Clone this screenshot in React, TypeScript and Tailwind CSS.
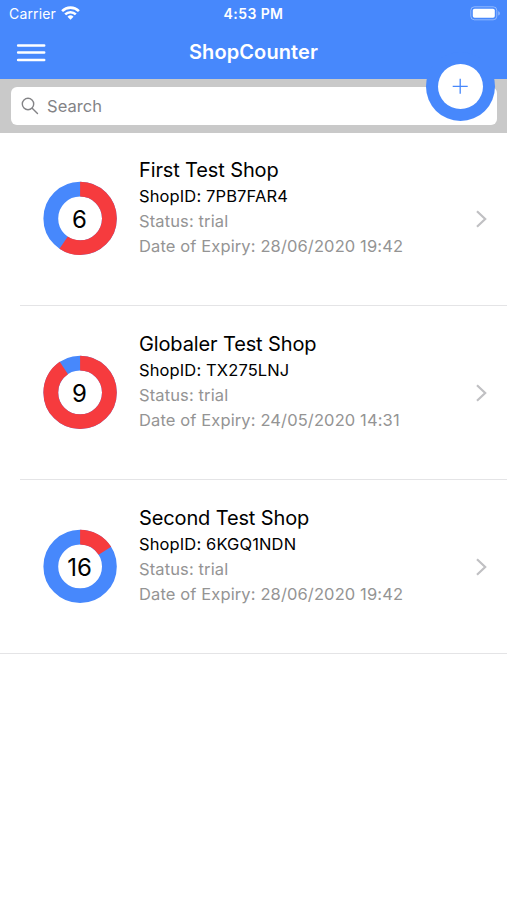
type Shop = {
  name: string;
  id: string;
  status: string;
  expiry: string;
  count: number;
  // share of the ring that is drawn red, clockwise from the top
  used: number;
};

const shops: Shop[] = [
  {
    name: "First Test Shop",
    id: "7PB7FAR4",
    status: "trial",
    expiry: "28/06/2020 19:42",
    count: 6,
    used: 0.594,
  },
  {
    name: "Globaler Test Shop",
    id: "TX275LNJ",
    status: "trial",
    expiry: "24/05/2020 14:31",
    count: 9,
    used: 0.905,
  },
  {
    name: "Second Test Shop",
    id: "6KGQ1NDN",
    status: "trial",
    expiry: "28/06/2020 19:42",
    count: 16,
    used: 0.16,
  },
];

function WifiIcon() {
  return (
    <svg width="19" height="14" viewBox="0 0 19 14" fill="none" stroke="white" strokeWidth="2.6">
      <path d="M1.1 5.1a12 12 0 0 1 16.8 0" />
      <path d="M4.2 8.4a7.6 7.6 0 0 1 10.6 0" />
      <path d="M9.5 13.8 6.5 10.8a4.3 4.3 0 0 1 6 0Z" fill="white" stroke="none" />
    </svg>
  );
}

function BatteryIcon() {
  return (
    <svg width="31" height="15" viewBox="0 0 31 15" fill="none">
      <rect x="0.8" y="0.8" width="26" height="13" rx="3.6" stroke="white" strokeOpacity="0.4" />
      <rect x="2.8" y="2.8" width="22" height="9" rx="1.8" fill="white" />
      <path d="M28.2 5.2v4.4c1.1-.4 1.7-1.2 1.7-2.2s-.6-1.8-1.7-2.2Z" fill="white" fillOpacity="0.4" />
    </svg>
  );
}

function StatusBar() {
  return (
    <div className="grid h-[26px] grid-cols-3 items-center pr-[6px] pl-[9px] text-white">
      <div className="flex items-center gap-[5px]">
        <span className="pt-[2px] text-[14px] leading-none tracking-[0.15px]">Carrier</span>
        <WifiIcon />
      </div>
      <span className="pt-[2px] pr-[3px] text-center text-[14px] leading-none font-semibold tracking-[0.4px]">
        4:53 PM
      </span>
      <div className="flex justify-end">
        <BatteryIcon />
      </div>
    </div>
  );
}

function NavBar() {
  return (
    <div className="grid h-[53px] grid-cols-[60px_1fr_60px] items-center">
      <button aria-label="Menu" className="pl-[16px]">
        <svg width="30" height="20" viewBox="0 0 30 20" stroke="white" strokeWidth="2.5" strokeLinecap="round">
          <path d="M2.1 2.6h26.1M2.1 9.6h26.1M2.1 17h26.1" />
        </svg>
      </button>
      <h1 className="pb-px text-center text-[20px] leading-none font-semibold tracking-[0.1px] text-white">
        ShopCounter
      </h1>
    </div>
  );
}

function AddButton() {
  return (
    <button
      aria-label="Add shop"
      className="absolute top-[52px] right-[12px] grid h-[69px] w-[69px] place-items-center rounded-full bg-[#4788fc]"
    >
      <span className="grid h-[45px] w-[45px] place-items-center rounded-full bg-white">
        <svg width="17" height="17" viewBox="0 0 17 17" stroke="#4788fc" strokeWidth="1.3">
          <path d="M8.2 .8v15M.7 8.3h15" />
        </svg>
      </span>
    </button>
  );
}

function SearchBar() {
  return (
    <div className="h-[54px] bg-[#c9c9c9] pt-[8px] pr-[10px] pl-[11px]">
      <div className="flex h-[38px] items-center rounded-[6px] bg-white pl-[10px] text-[#838386]">
        <svg width="18" height="18" viewBox="0 0 18 18" fill="none" stroke="currentColor" strokeWidth="1.4">
          <circle cx="7" cy="7" r="5.7" />
          <path d="m11.2 11.2 5.3 5.3" strokeLinecap="round" />
        </svg>
        <span className="pl-[8px] text-[16.5px] leading-none tracking-[0.05px]">Search</span>
      </div>
    </div>
  );
}

function Ring({ count, used }: { count: number; used: number }) {
  const radius = 29.3;
  const length = 2 * Math.PI * radius;

  return (
    <div className="grid h-[74px] w-[74px] shrink-0 place-items-center">
      <svg
        className="col-start-1 row-start-1 -rotate-90 overflow-visible"
        width="74"
        height="74"
        viewBox="0 0 74 74"
        fill="none"
        strokeWidth="14.8"
      >
        <circle cx="37.6" cy="37.1" r={radius} stroke="#4788fc" />
        <circle
          cx="37.6"
          cy="37.1"
          r={radius}
          stroke="#f63b3e"
          strokeDasharray={`${length * used} ${length}`}
        />
      </svg>
      <span className="z-10 col-start-1 row-start-1 pt-[2px] pr-[1px] text-[24px] leading-none">
        {count}
      </span>
    </div>
  );
}

function ShopRow({ shop, last }: { shop: Shop; last: boolean }) {
  return (
    <li>
      <div className="flex h-[173px] pl-[43px]">
        <div className="pt-[50px]">
          <Ring count={shop.count} used={shop.used} />
        </div>
        <div className="flex-1 pt-[25px] pl-[22px] text-[16.5px] leading-[25px] tracking-[0.12px]">
          <h2 className="pb-px text-[20px] leading-[26px] tracking-[-0.13px]">{shop.name}</h2>
          <p>ShopID: {shop.id}</p>
          <p className="text-[#949494]">Status: {shop.status}</p>
          <p className="text-[#949494]">Date of Expiry: {shop.expiry}</p>
        </div>
        <svg
          className="mt-[78px] mr-[19px] shrink-0"
          width="13"
          height="18"
          viewBox="0 0 13 18"
          fill="none"
          stroke="#c0c0c3"
          strokeWidth="2.2"
        >
          <path d="m2 1.2 8.2 7.8L2 16.8" />
        </svg>
      </div>
      <div className={last ? "h-px bg-[#e4e4e6]" : "ml-[20px] h-px bg-[#e4e4e6]"} />
    </li>
  );
}

export default function App() {
  return (
    <main className="relative h-[900px] w-[507px] overflow-hidden bg-white font-['Inter','Liberation_Sans',sans-serif] text-black">
      <header className="bg-[#4788fc]">
        <StatusBar />
        <NavBar />
      </header>
      <SearchBar />
      <AddButton />
      <ul className="-mt-px">
        {shops.map((shop, i) => (
          <ShopRow key={shop.id} shop={shop} last={i === shops.length - 1} />
        ))}
      </ul>
    </main>
  );
}
